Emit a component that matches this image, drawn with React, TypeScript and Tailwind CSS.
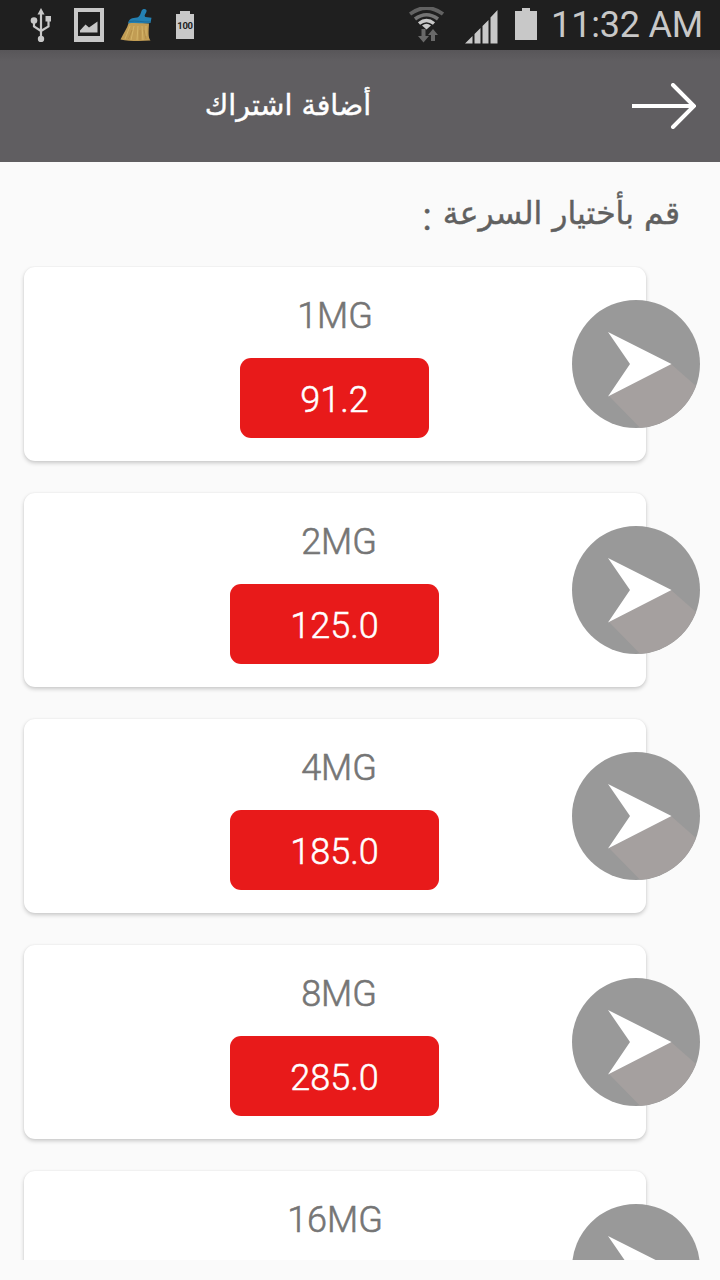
interface Plan {
  id: number;
  speed: string;
  price: string;
}

const plans: Plan[] = [
  { id: 1, speed: "1MG", price: "91.2" },
  { id: 2, speed: "2MG", price: "125.0" },
  { id: 3, speed: "4MG", price: "185.0" },
  { id: 4, speed: "8MG", price: "285.0" },
  { id: 5, speed: "16MG", price: "385.0" },
];

function UsbIcon() {
  return (
    <svg width="22" height="34" viewBox="0 0 22 34" fill="none" stroke="#c8c8c8" strokeWidth="2.200">
      <path d="M11 6v22M4 13v5.500l7 4.500M18.500 11v7.500l-7.500 4.500" />
      <path d="M11 0l3.500 6.500h-7z" fill="#c8c8c8" stroke="none" />
      <circle cx="4" cy="12.500" r="3.300" fill="#c8c8c8" stroke="none" />
      <rect x="15.500" y="8" width="5.500" height="5.500" fill="#c8c8c8" stroke="none" />
      <circle cx="11" cy="31" r="3.200" fill="#c8c8c8" stroke="none" />
    </svg>
  );
}

function PictureIcon() {
  return (
    <svg width="30" height="34" viewBox="0 0 30 34">
      <path d="M0 0h30v34H0zM4 4v24h22V4z" fill="#c8c8c8" fillRule="evenodd" />
      <path d="M6 24.500v-2l5.500-6 3.500 3 8.500-6v11z" fill="#c8c8c8" />
    </svg>
  );
}

function BroomIcon() {
  return (
    <svg width="32" height="34" viewBox="0 0 32 34">
      <path d="M9 14c-2 7-6 12-8.500 17.500 9 1.800 20 1.800 30 1-2.500-3-2-9-1.500-17z" fill="#c29d54" />
      <path d="M10 18L5 31M14 18l-3 14M18 18l-1 14M22 18l1 14M26 18v10" stroke="#d4b468" strokeWidth="1" fill="none" />
      <path d="M12 22L8.500 31M20 22v10M24 22l2 9" stroke="#a88441" strokeWidth=".6" fill="none" />
      <path d="M8 15.500c1-5 4-5.500 9-6 3-.6 3.500-4 4.500-6.500 1-3 6-2.500 5 .5-.8 2.500-3 4-1 5.500l6 .7-1 5.300C23 16 15 14 8 15.500z" fill="#2480b2" />
      <path d="M9 13.500c7-1.500 14 1 21 .5" stroke="#1c6996" strokeWidth="1" fill="none" />
    </svg>
  );
}

function WifiIcon() {
  return (
    <svg width="36" height="36" viewBox="0 0 36 36" fill="none">
      <path d="M1 7Q17.500-5 34 7" stroke="#626262" strokeWidth="3.800" />
      <path d="M6 12q11.500-8.500 23 0" stroke="#747474" strokeWidth="3.600" />
      <path d="M10 16.500q7.500-6 15 0" stroke="#c8c8c8" strokeWidth="3.400" />
      <path d="M13 18.500q4.500-3.500 9 0L17.500 22.500z" fill="#c8c8c8" />
      <path d="M12.500 22h4v7H20l-5.500 6.500L9 29h3.500zM22 34v-6h-3l5-6 5 6h-3v6z" fill="#686868" />
    </svg>
  );
}

function SignalIcon() {
  return (
    <svg width="33" height="34" viewBox="0 0 33 34" fill="#c8c8c8">
      <path d="M0 33.500l7.500-7.500v7.500zM9.500 24l6-6v15.500h-6zM17.500 16l6-6v23.500h-6zM25.500 7.500L32.500 0v33.500h-7z" />
    </svg>
  );
}

function StatusBar() {
  return (
    <div className="flex h-[50px] shrink-0 items-start justify-between bg-[#1f1f1f] pr-[17px] pl-[30px] text-[#c8c8c8]">
      <div className="flex pt-2">
        <UsbIcon />
        <div className="ml-[22px]">
          <PictureIcon />
        </div>
        <div className="ml-4">
          <BroomIcon />
        </div>
        <div className="mt-[3px] ml-6 flex flex-col items-center">
          <div className="h-[3px] w-2.5 bg-[#c8c8c8]" />
          <div className="flex h-[25px] w-[18px] items-center justify-center bg-[#c8c8c8] text-[9.500px] font-bold tracking-[-0.3px] text-[#222]">
            100
          </div>
        </div>
      </div>
      <div className="flex">
        <div className="mt-[7px]">
          <WifiIcon />
        </div>
        <div className="mt-[10px] ml-[20px]">
          <SignalIcon />
        </div>
        <div className="mt-2 ml-[17px] flex flex-col items-center">
          <div className="h-[3px] w-2 bg-[#c8c8c8]" />
          <div className="h-[29px] w-[22px] bg-[#c8c8c8]" />
        </div>
        <div className="ml-[14px] text-[36px] leading-[50px] tracking-[-0.2px]">11:32 AM</div>
      </div>
    </div>
  );
}

function SendIcon() {
  return (
    <svg width="128" height="128" viewBox="0 0 128 128">
      <circle cx="64" cy="64" r="64" fill="#999999" />
      <path d="M37 96L68 127.800A64 64 0 0 0 124 86L99 64z" fill="#a5a09f" />
      <path d="M36 32L99.500 64 36 96.500 58 64z" fill="#fff" />
    </svg>
  );
}

function PlanCard({ plan }: { plan: Plan }) {
  return (
    <div className="relative flex h-[194px] w-[622px] shrink-0 flex-col items-center rounded-[11px] bg-white pt-[28px] shadow-[0_2px_4px_rgba(0,0,0,0.2),0_0_2px_rgba(0,0,0,0.06)]">
      <div
        className={`h-[63px] text-[36px] leading-[43px] font-light text-[#757575] [-webkit-text-stroke:0.6px_#757575] ${
          plan.speed.startsWith("1") ? "" : "pl-2"
        }`}
      >
        {plan.speed}
      </div>
      <button className="mr-px h-20 rounded-[11px] bg-[#e81a1a] px-[60px] pt-[3px] text-[36px] font-light text-white [-webkit-text-stroke:0.5px_#fff]">
        {plan.price}
      </button>
      <div className="absolute top-[33px] left-[548px]">
        <SendIcon />
      </div>
    </div>
  );
}

export default function App() {
  return (
    <div className="flex h-[1280px] w-[720px] flex-col overflow-hidden bg-[#fafafa] font-[Roboto,sans-serif]">
      <StatusBar />

      {/* Header */}
      <div className="flex h-28 shrink-0 items-center bg-linear-to-b from-[#585659] to-[#605e61] to-10% pr-6">
        <h1
          dir="rtl"
          className="w-[576px] text-center font-['DejaVu_Sans',sans-serif] text-[28.500px] text-white [-webkit-text-stroke:0.4px_#fff]"
        >
          أضافة اشتراك
        </h1>
        <svg className="ml-auto" width="64" height="46" viewBox="0 0 64 46" fill="none" stroke="#fff" strokeWidth="4">
          <path d="M0 23h62" />
          <path d="M41 2l21 21-21 21" strokeLinecap="round" />
        </svg>
      </div>

      <h2
        dir="rtl"
        className="h-[104px] shrink-0 pt-[25px] pr-10 font-['DejaVu_Sans',sans-serif] text-[31.500px] leading-[48px] text-[#606060] [-webkit-text-stroke:0.4px_#606060]"
      >
        قم بأختيار السرعة <span className="relative top-1.5 right-px font-[Roboto] text-[38px]">:</span>
      </h2>

      {/* Plans */}
      <div className="flex h-[994px] shrink-0 flex-col gap-8 overflow-hidden pt-px pl-6">
        {plans.map((plan) => (
          <PlanCard key={plan.id} plan={plan} />
        ))}
      </div>
    </div>
  );
}
